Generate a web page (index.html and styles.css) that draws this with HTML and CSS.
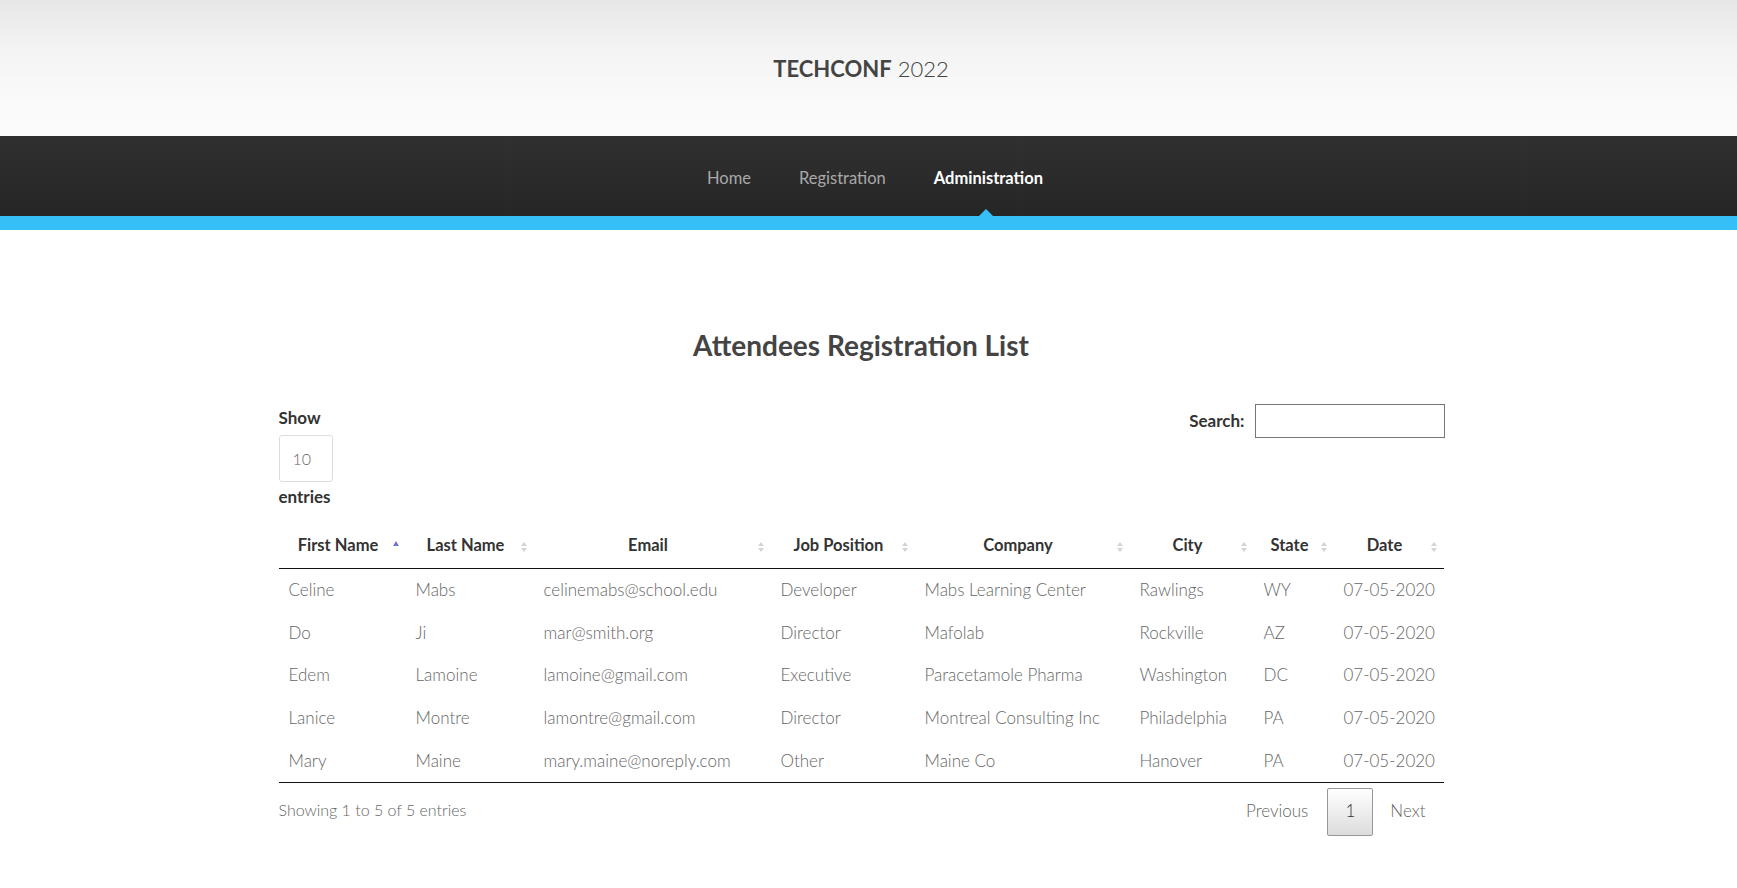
FILE: index.html
```html
<!DOCTYPE html>
<html lang="en">
<head>
<meta charset="utf-8">
<title>TechConf 2022 - Administration</title>
<link rel="stylesheet" href="styles.css">
</head>
<body>
<header class="site-header">
  <h1 class="brand"><strong>TECHCONF</strong> 2022</h1>
</header>
<nav class="site-nav">
  <ul class="nav-list">
    <li><a class="nav-link" href="#">Home</a></li>
    <li><a class="nav-link" href="#">Registration</a></li>
    <li><a class="nav-link active" href="#">Administration</a></li>
  </ul>
</nav>
<div class="band"></div>
<main class="main">
  <div class="container">
    <h2 class="page-title">Attendees Registration List</h2>
    <div class="dt-top">
      <div class="dt-length">
        <span class="dt-label">Show</span>
        <div class="dt-select">10</div>
        <span class="dt-label">entries</span>
      </div>
      <div class="dt-search">
        <span class="dt-label">Search:</span>
        <input class="dt-input" type="search" aria-label="Search">
      </div>
    </div>
    <table class="dt-table">
      <colgroup>
        <col class="c1"><col class="c2"><col class="c3"><col class="c4"><col class="c5"><col class="c6"><col class="c7"><col class="c8">
      </colgroup>
      <thead>
        <tr>
          <th class="sort sort-asc">First Name</th>
          <th class="sort">Last Name</th>
          <th class="sort">Email</th>
          <th class="sort">Job Position</th>
          <th class="sort">Company</th>
          <th class="sort">City</th>
          <th class="sort">State</th>
          <th class="sort">Date</th>
        </tr>
      </thead>
      <tbody>
        <tr><td>Celine</td><td>Mabs</td><td>celinemabs@school.edu</td><td>Developer</td><td>Mabs Learning Center</td><td>Rawlings</td><td>WY</td><td>07-05-2020</td></tr>
        <tr><td>Do</td><td>Ji</td><td>mar@smith.org</td><td>Director</td><td>Mafolab</td><td>Rockville</td><td>AZ</td><td>07-05-2020</td></tr>
        <tr><td>Edem</td><td>Lamoine</td><td>lamoine@gmail.com</td><td>Executive</td><td>Paracetamole Pharma</td><td>Washington</td><td>DC</td><td>07-05-2020</td></tr>
        <tr><td>Lanice</td><td>Montre</td><td>lamontre@gmail.com</td><td>Director</td><td>Montreal Consulting Inc</td><td>Philadelphia</td><td>PA</td><td>07-05-2020</td></tr>
        <tr><td>Mary</td><td>Maine</td><td>mary.maine@noreply.com</td><td>Other</td><td>Maine Co</td><td>Hanover</td><td>PA</td><td>07-05-2020</td></tr>
      </tbody>
    </table>
    <div class="dt-bottom">
      <div class="dt-info">Showing 1 to 5 of 5 entries</div>
      <div class="dt-pages">
        <span class="page-link">Previous</span>
        <span class="page-btn">1</span>
        <span class="page-link next">Next</span>
      </div>
    </div>
  </div>
</main>
</body>
</html>
```

FILE: styles.css
```css
* { box-sizing: border-box; }
html, body { margin: 0; padding: 0; }
body {
  font-family: "Source Sans Pro", Lato, "Noto Sans", sans-serif;
  color: #333;
  background: #fff;
}

.site-header {
  height: 136px;
  padding-right: 15px;
  display: flex;
  align-items: center;
  justify-content: center;
  background: linear-gradient(#e7e7e7 0%, #f3f3f3 35%, #f9f9f9 65%, #fbfbfb 100%);
}
.brand {
  margin: 0;
  font-size: 22px;
  font-weight: 300;
  color: #444;
  line-height: 1;
  padding-top: 1px;
}
.brand strong { font-weight: 700; }

.site-nav {
  height: 80px;
  padding-right: 15px;
  background: linear-gradient(#303030, #262626);
  display: flex;
  justify-content: center;
}
.nav-list {
  list-style: none;
  margin: 0 0 0 28px;
  padding: 0;
  display: flex;
  gap: 4px;
}
.nav-list li { display: flex; }
.nav-link {
  position: relative;
  display: flex;
  align-items: center;
  padding: 3px 22px 0;
  font-size: 16.5px;
  color: #a9a9a9;
  text-decoration: none;
  font-weight: 400;
}
.nav-link.active {
  color: #fff;
  font-weight: 700;
}
.nav-link.active::after {
  content: "";
  position: absolute;
  left: 50%;
  bottom: 0;
  margin-left: -9px;
  border-left: 7px solid transparent;
  border-right: 7px solid transparent;
  border-bottom: 7px solid #36bff6;
}
.band {
  height: 14px;
  background: #36bff6;
}

.main { padding-right: 15px; }
.container {
  width: 1165px;
  margin: 0 auto;
  padding-bottom: 40px;
}
.page-title {
  margin: 95px 0 39px;
  text-align: center;
  font-size: 28px;
  line-height: 40px;
  font-weight: 700;
  color: #444;
}

.dt-top {
  display: flex;
  justify-content: space-between;
  align-items: flex-start;
}
.dt-label {
  font-size: 17px;
  font-weight: 700;
  color: #333;
  line-height: 24px;
}
.dt-length {
  display: flex;
  flex-direction: column;
  align-items: flex-start;
  margin-top: 2px;
}
.dt-select {
  margin-top: 5px;
  margin-bottom: 3px;
  width: 54px;
  height: 47px;
  border: 1px solid #ddd;
  border-radius: 3px;
  padding-left: 13px;
  font-size: 16px;
  font-weight: 300;
  color: #666;
  display: flex;
  align-items: center;
}
.dt-search {
  display: flex;
  align-items: center;
  gap: 10px;
  margin-right: -1px;
}
.dt-input {
  width: 190px;
  height: 34px;
  border: 1px solid #767676;
  border-radius: 0;
  margin: 0;
  font-family: inherit;
}

.dt-table {
  width: 100%;
  table-layout: fixed;
  border-collapse: separate;
  border-spacing: 0;
  margin-top: 15px;
}
.c1 { width: 127px; }
.c2 { width: 128px; }
.c3 { width: 237px; }
.c4 { width: 144px; }
.c5 { width: 215px; }
.c6 { width: 124px; }
.c7 { width: 80px; }
.c8 { width: 110px; }

.dt-table th {
  position: relative;
  padding: 9px 18px 11px 10px;
  border-bottom: 1px solid #111;
  font-size: 16.5px;
  line-height: 24px;
  font-weight: 700;
  color: #333;
  text-align: center;
  white-space: nowrap;
}
.sort::before,
.sort::after {
  content: "";
  position: absolute;
  right: 7px;
  border-left: 3px solid transparent;
  border-right: 3px solid transparent;
}
.sort::before {
  top: 18px;
  border-bottom: 4px solid #d4d4d4;
}
.sort::after {
  top: 24px;
  border-top: 4px solid #d4d4d4;
}
.sort-asc::before {
  top: 17px;
  border-bottom: 5px solid #7272d4;
}
.sort-asc::after { display: none; }

.dt-table td {
  padding: 8px 10px;
  font-size: 17px;
  line-height: 26.67px;
  font-weight: 300;
  color: #666;
  white-space: nowrap;
}
.dt-table tbody tr:last-child td { border-bottom: 1px solid #111; }

.dt-bottom {
  display: flex;
  justify-content: space-between;
  align-items: center;
  padding-top: 5px;
}
.dt-info {
  font-size: 16px;
  font-weight: 300;
  color: #666;
  line-height: 1;
  margin-bottom: 5px;
}
.dt-pages {
  display: flex;
  align-items: center;
}
.page-link {
  padding: 0 19px;
  font-size: 17px;
  font-weight: 300;
  color: #666;
  line-height: 1;
  margin-bottom: 4px;
}
.page-btn {
  width: 46px;
  height: 48px;
  display: flex;
  align-items: center;
  justify-content: center;
  border: 1px solid #979797;
  border-radius: 2px;
  background: linear-gradient(#ffffff, #dcdcdc);
  font-size: 17px;
  font-weight: 300;
  color: #333;
  padding-bottom: 3px;
}
.page-link.next { padding: 0 18px 0 17px; }
```
